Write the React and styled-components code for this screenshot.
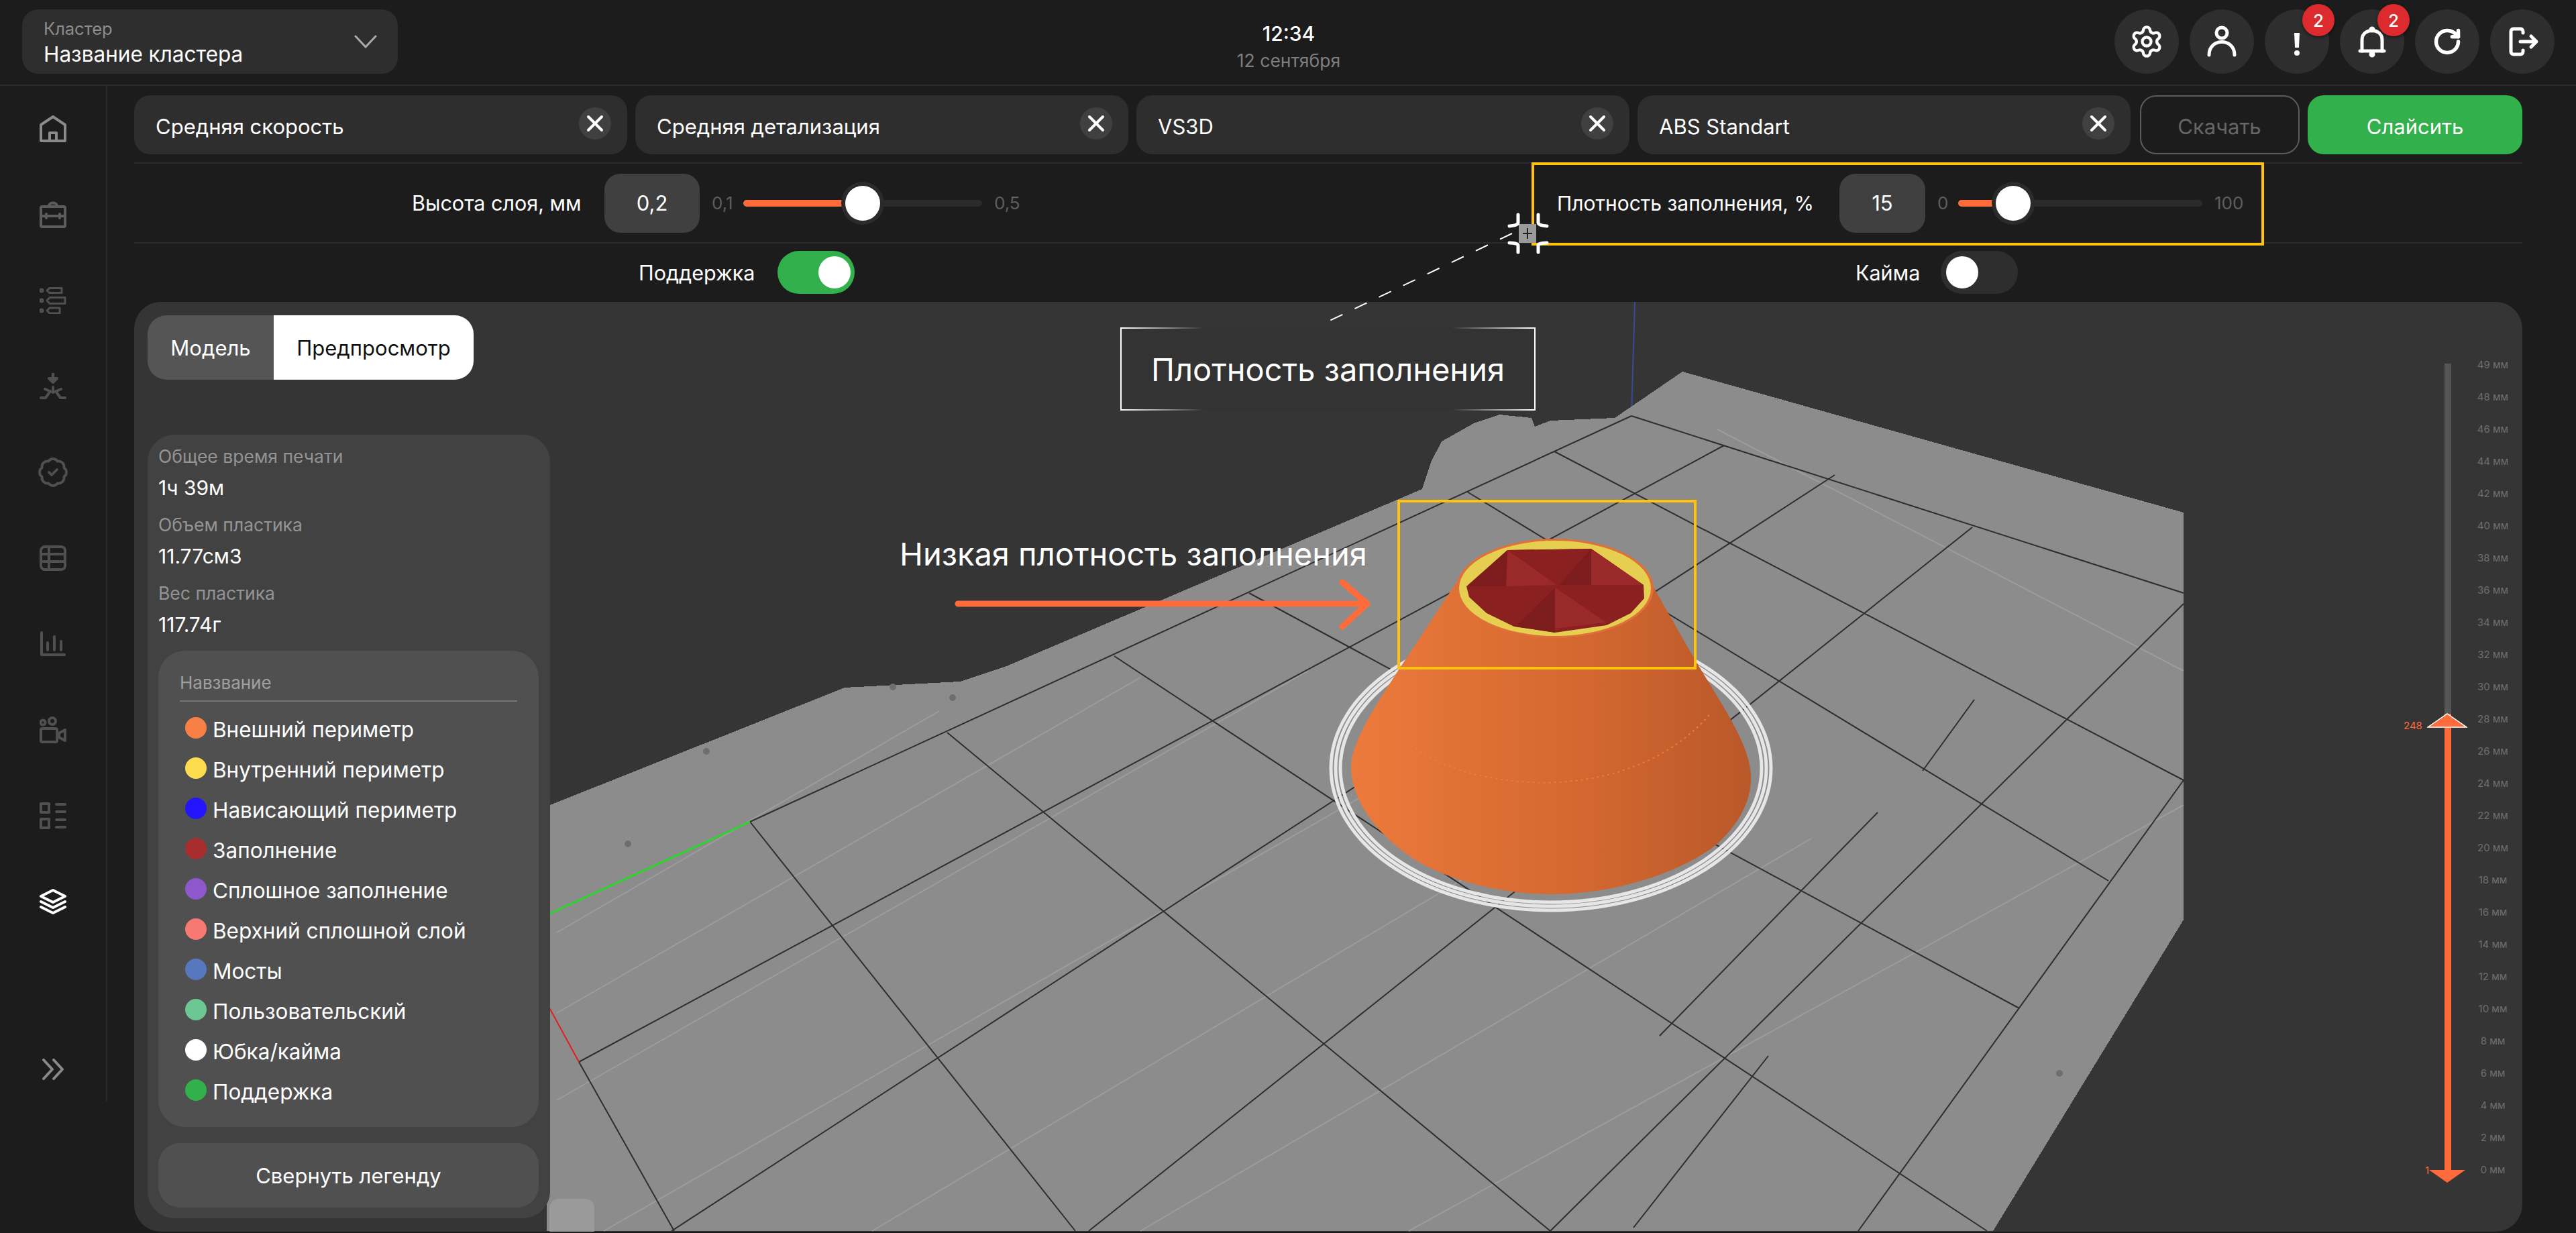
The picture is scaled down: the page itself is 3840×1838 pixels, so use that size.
import React from "react";
import styled, { createGlobalStyle } from "styled-components";
import { Settings, RotateCw, X, BadgeCheck } from "lucide-react";

const GlobalStyle = createGlobalStyle`
  html, body {
    margin: 0;
    padding: 0;
    background: #1c1c1c;
  }
  * {
    box-sizing: border-box;
  }
`;

const Page = styled.div`
  position: relative;
  width: 3840px;
  height: 1838px;
  overflow: hidden;
  background: #1c1c1c;
  color: #fff;
  font-family: Inter, "Noto Sans", sans-serif;
`;

const Header = styled.header`
  display: flex;
  align-items: center;
  justify-content: space-between;
  height: 128px;
  padding: 0 32px 2px 33px;
  border-bottom: 2px solid #2b2b2b;
`;

const Cluster = styled.div`
  display: flex;
  align-items: center;
  justify-content: space-between;
  width: 560px;
  height: 96px;
  padding: 0 31px 0 32px;
  background: #2e2e2e;
  border-radius: 24px;
`;

const ClusterText = styled.div`
  display: flex;
  flex-direction: column;
  gap: 4px;
  padding-top: 3px;
`;

const ClusterLabel = styled.span`
  font-size: 25.5px;
  line-height: 30px;
  color: #8c8c8c;
`;

const ClusterName = styled.span`
  font-size: 31.5px;
  line-height: 38px;
`;

const Clock = styled.div`
  position: absolute;
  left: 1771px;
  top: 30px;
  width: 300px;
  text-align: center;
`;

const ClockTime = styled.div`
  font-size: 30px;
  line-height: 40px;
  font-weight: 500;
`;

const ClockDate = styled.div`
  font-size: 26.5px;
  line-height: 40px;
  color: #7f7f7f;
`;

const Actions = styled.div`
  display: flex;
  gap: 16px;
`;

const RoundButton = styled.div`
  position: relative;
  display: flex;
  align-items: center;
  justify-content: center;
  width: 96px;
  height: 96px;
  background: #2e2e2e;
  border-radius: 50%;
  color: #fff;
`;

const Badge = styled.span`
  position: absolute;
  top: -8px;
  right: -8px;
  display: flex;
  align-items: center;
  justify-content: center;
  width: 48px;
  height: 48px;
  background: #dc2b2e;
  border-radius: 50%;
  box-shadow: 0 2px 4px rgba(0, 0, 0, 0.5);
  font-size: 26px;
  font-weight: 500;
`;

const Body = styled.div`
  display: flex;
  height: 1710px;
`;

const Sidebar = styled.nav`
  display: flex;
  flex: none;
  flex-direction: column;
  width: 160px;
  height: 1513px;
  border-right: 2px solid #2b2b2b;
`;

const SideItem = styled.div`
  display: flex;
  align-items: center;
  justify-content: center;
  flex: 0 0 ${(p) => p.$height || 128}px;
  margin-top: ${(p) => (p.$bottom ? "auto" : "0")};
  color: ${(p) => p.$color || "#505050"};
`;

const Main = styled.main`
  flex: 1;
  min-width: 0;
  padding: 14px 80px 2px 40px;
  display: flex;
  flex-direction: column;
`;

const PresetRow = styled.div`
  display: flex;
  gap: 12.5px;
  height: 88px;
`;

const Chip = styled.div`
  display: flex;
  align-items: center;
  justify-content: space-between;
  width: 734.5px;
  padding: 0 24px 0 32px;
  background: #2e2e2e;
  border-radius: 24px;
  font-size: 31px;
`;

const ChipName = styled.span`
  padding-top: 5px;
`;

const ChipClose = styled.span`
  display: flex;
  align-items: center;
  justify-content: center;
  width: 48px;
  height: 48px;
  margin-top: -4px;
  background: #404040;
  border-radius: 50%;
`;

const OutlineButton = styled.div`
  display: flex;
  align-items: center;
  justify-content: center;
  width: 238px;
  margin-left: 1.5px;
  padding-top: 4px;
  border: 2px solid #5c5c5c;
  border-radius: 24px;
  font-size: 31px;
  color: #666;
`;

const GreenButton = styled.div`
  display: flex;
  align-items: center;
  justify-content: center;
  width: 320px;
  padding-top: 4px;
  background: #31b04b;
  border-radius: 24px;
  font-size: 31px;
`;

const ParamRow = styled.div`
  display: grid;
  grid-template-columns: 1780px 1780px;
  align-items: ${(p) => p.$align || "center"};
  height: ${(p) => p.$height}px;
  margin-top: ${(p) => p.$top || 0}px;
  border-top: 2px solid #2b2b2b;
`;

const ParamCell = styled.div`
  display: flex;
  align-items: center;
  padding-left: ${(p) => p.$inset}px;
`;

const ParamLabel = styled.span`
  flex: none;
  width: ${(p) => p.$width}px;
  font-size: ${(p) => p.$size || 30.5}px;
  margin-right: ${(p) => p.$gap}px;
  white-space: nowrap;
`;

const ValueBox = styled.div`
  display: flex;
  flex: none;
  align-items: center;
  justify-content: center;
  width: ${(p) => p.$width}px;
  height: 88px;
  background: #404040;
  border-radius: 24px;
  font-size: 31px;
`;

const RangeText = styled.span`
  flex: none;
  width: ${(p) => p.$width}px;
  margin: 0 16px 0 18px;
  font-size: 26px;
  color: #5e5e5e;
  white-space: nowrap;
`;

const Track = styled.div`
  position: relative;
  flex: none;
  width: ${(p) => p.$width}px;
  height: 10px;
  background: #2b2b2b;
  border-radius: 5px;
`;

const TrackFill = styled.div`
  height: 100%;
  background: #ff6b3a;
  border-radius: 5px 0 0 5px;
`;

const Thumb = styled.div`
  position: absolute;
  top: 50%;
  width: 52px;
  height: 52px;
  background: #fff;
  border-radius: 50%;
  box-shadow: 0 0 0 6px #2b2b2b;
  transform: translate(-50%, -50%);
`;

const Switch = styled.div`
  display: flex;
  flex: none;
  align-items: center;
  justify-content: ${(p) => (p.$on ? "flex-end" : "flex-start")};
  width: 115px;
  height: 64px;
  padding: 0 6px 0 8px;
  background: ${(p) => (p.$on ? "#31b04b" : "#2e2e2e")};
  border-radius: 32px;
`;

const SwitchKnob = styled.div`
  width: 48px;
  height: 48px;
  background: #fff;
  border-radius: 50%;
`;

const ViewerPanel = styled.section`
  position: relative;
  flex: 1;
  margin-top: 12px;
  padding: 20px;
  display: flex;
  flex-direction: column;
  background: #353535;
  border-radius: 40px;
  overflow: hidden;
`;

const Scene = styled.svg`
  position: absolute;
  left: 0;
  top: 0;
  width: 3560px;
  height: 1386px;
`;

const Tabs = styled.div`
  position: relative;
  display: flex;
  width: 486px;
  height: 96px;
  border-radius: 28px;
  overflow: hidden;
  font-size: 31px;
`;

const Tab = styled.div`
  display: flex;
  align-items: center;
  justify-content: center;
  width: ${(p) => p.$width}px;
  background: ${(p) => (p.$active ? "#fff" : "#555")};
  color: ${(p) => (p.$active ? "#111" : "#fff")};
`;

const InfoPanel = styled.div`
  position: relative;
  display: flex;
  flex-direction: column;
  width: 600px;
  height: 1168px;
  margin-top: 82px;
  padding: 16px 17px 16px 16px;
  background: #424242;
  border-radius: 40px;
`;

const Stat = styled.div`
  height: 102px;
`;

const StatLabel = styled.div`
  font-size: 26.5px;
  line-height: 32px;
  color: #949494;
`;

const StatValue = styled.div`
  margin-top: 11px;
  font-size: 30px;
  line-height: 40px;
`;

const Legend = styled.div`
  height: 710px;
  padding: 32px 32px 0;
  background: #505050;
  border-radius: 40px;
`;

const LegendTitle = styled.div`
  padding-bottom: 10px;
  border-bottom: 2px solid #757575;
  font-size: 26px;
  line-height: 32px;
  color: #a0a0a0;
`;

const LegendList = styled.div`
  display: flex;
  flex-direction: column;
  margin-top: 11px;
  padding-left: 8px;
`;

const LegendItem = styled.div`
  display: flex;
  align-items: center;
  gap: 9px;
  height: 60px;
  font-size: 31.5px;
`;

const Dot = styled.span`
  flex: none;
  width: 32px;
  height: 32px;
  margin-top: -4px;
  background: ${(p) => p.$color};
  border-radius: 50%;
`;

const CollapseButton = styled.div`
  display: flex;
  align-items: center;
  justify-content: center;
  height: 96px;
  margin-top: 24px;
  background: #505050;
  border-radius: 32px;
  font-size: 31px;
`;

const LayerScale = styled.div`
  position: absolute;
  left: 3360px;
  top: 70px;
  display: flex;
  width: 200px;
  height: 1260px;
`;

const LayerBar = styled.div`
  position: absolute;
  left: 84px;
  top: 22px;
  width: 10px;
  height: 1202px;
  background: #555;
`;

const LayerBarFill = styled.div`
  position: absolute;
  left: 0;
  right: 0;
  bottom: 0;
  height: 680px;
  background: #ff6b3a;
`;

const LayerTicks = styled.div`
  position: absolute;
  left: 126px;
  top: 0;
  width: 60px;
`;

const LayerTick = styled.div`
  height: 48px;
  line-height: 48px;
  font-size: 15px;
  text-align: center;
  color: #6f6f6f;
  white-space: nowrap;
`;

const LayerCount = styled.span`
  position: absolute;
  left: ${(p) => p.$left}px;
  top: ${(p) => p.$top}px;
  font-size: 15px;
  line-height: 20px;
  color: #ff6b3a;
`;

const LayerHandle = styled.svg`
  position: absolute;
  left: 58px;
  top: ${(p) => p.$top}px;
`;

const Frame = styled.div`
  position: absolute;
  left: ${(p) => p.$left}px;
  top: ${(p) => p.$top}px;
  width: ${(p) => p.$width}px;
  height: ${(p) => p.$height}px;
  border: 4px solid #ffc20e;
  pointer-events: none;
`;

const Overlay = styled.svg`
  position: absolute;
  left: 0;
  top: 0;
  pointer-events: none;
`;

const Callout = styled.div`
  position: absolute;
  left: 1670px;
  top: 488px;
  display: flex;
  align-items: center;
  justify-content: center;
  width: 619px;
  height: 124px;
  background: #333;
  border-left: 2px solid #fff;
  border-right: 2px solid #fff;
  font-size: 47px;

  &::before,
  &::after {
    content: "";
    position: absolute;
    left: 0;
    right: 0;
    height: 2px;
    background: linear-gradient(90deg, #fff 0, transparent 20%, transparent 80%, #fff 100%);
  }
  &::before {
    top: 0;
  }
  &::after {
    bottom: 0;
  }
`;

const Note = styled.div`
  position: absolute;
  left: 1341px;
  top: 796px;
  font-size: 47px;
  line-height: 60px;
  white-space: nowrap;
`;

const stroke = { fill: "none", stroke: "currentColor", strokeLinecap: "round", strokeLinejoin: "round" };

const HomeIcon = () => (
  <svg width="40" height="40" viewBox="0 0 40 40" {...stroke} strokeWidth="4">
    <path d="M20 2 L38 14 V38 H2 V14 Z" />
    <path d="M15 38 V26 H25 V38" />
  </svg>
);

const BriefcaseIcon = () => (
  <svg width="40" height="40" viewBox="0 0 40 40" {...stroke} strokeWidth="4">
    <rect x="2" y="8" width="36" height="30" rx="2" />
    <path d="M14 7 C14 1 26 1 26 7" />
    <path d="M2 22 H38" />
    <path d="M10 19 V25 M30 19 V25" />
  </svg>
);

const TasksIcon = () => (
  <svg width="40" height="40" viewBox="0 0 40 40" {...stroke} strokeWidth="3">
    <circle cx="3" cy="5" r="2" />
    <circle cx="3" cy="20" r="2" />
    <circle cx="3" cy="35" r="2" />
    <path d="M11 5 L15 1.5 H33 V8.5 H15 Z" />
    <path d="M11 20 L15 15.5 H38 V24.5 H15 Z" />
    <path d="M11 35 L15 31 H30 V39 H15 Z" />
  </svg>
);

const MergeIcon = () => (
  <svg width="40" height="40" viewBox="0 0 40 40" {...stroke} strokeWidth="4">
    <path d="M20 0 V9" />
    <path d="M14 8 H26 L20 14 Z" fill="currentColor" />
    <path d="M20 21 V29 M20 29 L8 24 M20 29 L32 24" />
    <path d="M2 37 H9 L14 30 M38 37 H31 L26 30" />
  </svg>
);

const TableIcon = () => (
  <svg width="40" height="38" viewBox="0 0 40 38" {...stroke} strokeWidth="4">
    <rect x="2" y="2" width="36" height="34" rx="6" />
    <path d="M2 13 H38 M2 24 H38 M14 2 V36" />
  </svg>
);

const ChartIcon = () => (
  <svg width="40" height="38" viewBox="0 0 40 38" {...stroke} strokeWidth="4">
    <path d="M3 2 V35 H37" />
    <path d="M12 17 V28 M22 8 V28 M32 15 V28" />
  </svg>
);

const CameraIcon = () => (
  <svg width="40" height="40" viewBox="0 0 40 40" {...stroke} strokeWidth="4">
    <circle cx="5" cy="9" r="3.5" />
    <circle cx="19" cy="7" r="5" />
    <rect x="2" y="18" width="24" height="20" rx="2" />
    <path d="M38 20 V36 L29 31 V25 Z" />
  </svg>
);

const GridListIcon = () => (
  <svg width="40" height="40" viewBox="0 0 40 40" {...stroke} strokeWidth="4">
    <rect x="2" y="2" width="12" height="13" />
    <rect x="2" y="25" width="12" height="13" />
    <path d="M25 3 H38 M25 14 H38 M25 26 H38 M25 37 H38" />
  </svg>
);

const LayersIcon = () => (
  <svg width="40" height="38" viewBox="0 0 40 38" {...stroke} strokeWidth="4">
    <path d="M20 2 L38 11 L20 20 L2 11 Z" />
    <path d="M2 19 L20 28 L38 19" />
    <path d="M2 27 L20 36 L38 27" />
  </svg>
);

const DoubleChevronIcon = () => (
  <svg width="34" height="32" viewBox="0 0 34 32" {...stroke} strokeWidth="4">
    <path d="M3 2 L16 16 L3 30" />
    <path d="M18 2 L31 16 L18 30" />
  </svg>
);

const ChevronIcon = () => (
  <svg width="34" height="20" viewBox="0 0 34 20" fill="none" stroke="#aaa" strokeWidth="3" strokeLinecap="round">
    <path d="M2 2 L17 18 L32 2" />
  </svg>
);

const UserIcon = () => (
  <svg width="48" height="48" viewBox="0 0 48 48" {...stroke} strokeWidth="5">
    <circle cx="24" cy="11" r="8" />
    <path d="M5 44 C5 18 43 18 43 44" />
  </svg>
);

const AlertIcon = () => (
  <svg width="48" height="48" viewBox="0 0 48 48" fill="#fff">
    <path d="M20 11 H28 L27 33 H21 Z" />
    <circle cx="24" cy="41" r="4" />
  </svg>
);

const BellIcon = () => (
  <svg width="48" height="48" viewBox="0 0 48 48" {...stroke} strokeWidth="5">
    <path d="M9 38 V21 C9 3 39 3 39 21 V38" />
    <path d="M6 38 H42" />
    <circle cx="24" cy="6" r="2" fill="#fff" />
    <circle cx="24" cy="43" r="2" fill="#fff" />
  </svg>
);

const ExitIcon = () => (
  <svg width="52" height="48" viewBox="0 0 52 48" {...stroke} strokeWidth="5">
    <path d="M27 11 V9 C27 6 25 5 23 5 H13 C10 5 9 7 9 9 V39 C9 41 10 43 13 43 H23 C25 43 27 42 27 39 V37" />
    <path d="M23 24 H46 M39 16 L47 24 L39 32" />
  </svg>
);

const bedOutline =
  "815,1202 1259,1025 1431,1016 1498,994 2120,729 2133,689 2149,658 2197,631 2235,618 2283,623 2288,636 2311,627 2407,623 2508,554 3255,764 3255,1371 2971,1835 815,1835";

const gridLines = [
  "2432,620 1118,1225",
  "2432,620 3255,884",
  "1118,1225 1603,1835",
  "1412,1092 2311,1835",
  "1661,978 2962,1835",
  "1862,884 3010,1503",
  "2187,733 3143,1313",
  "2317,673 3255,1163",
  "863,1583 2570,664",
  "1001,1835 2735,708",
  "1623,1835 2940,786",
  "2311,1835 3255,900",
  "2770,1835 3255,1163",
  "863,1583 1005,1835",
  "2435,1830 2636,1574",
  "2474,1544 2799,1211",
  "2866,1149 2943,1043",
];

const faintLines = [
  "830,1390 1400,1060",
  "830,1510 1700,1010",
  "830,1640 1950,1000",
  "900,1835 2200,1090",
  "1300,1835 2400,1180",
  "1700,1835 2700,1250",
  "2100,1835 3255,1200",
  "2560,640 3255,1000",
];

const bedSpecks = [
  [1331, 1024], [1420, 1040], [1053, 1120], [936, 1258], [3070, 1600],
];

const cone =
  "M2173 865 L2086 997 C2050 1052 2012 1110 2014 1146 C2016 1200 2060 1250 2110 1282 C2170 1318 2250 1333 2313 1333 C2400 1333 2500 1305 2560 1258 C2590 1230 2612 1195 2610 1155 C2608 1115 2580 1070 2528 986 L2464 874 Z";

const infillHole =
  "2247,820 2372,818 2450,872 2451,892 2431,914 2395,932 2318,943 2257,934 2216,914 2190,890 2186,874";

const pinwheel = [
  ["2247,820 2372,818 2321,872", "#8a2020"],
  ["2247,820 2321,872 2245,874", "#9a2929"],
  ["2247,820 2245,874 2188,874", "#7d1c1c"],
  ["2188,876 2313,876 2260,934", "#8a2020"],
  ["2318,876 2318,943 2260,934", "#7d1c1c"],
  ["2318,876 2395,928 2318,937", "#9a2929"],
  ["2321,874 2448,874 2395,928", "#8a2020"],
  ["2372,818 2450,872 2324,872", "#9a2929"],
  ["2372,818 2372,872 2324,872", "#7d1c1c"],
];

const sideIcons = [
  { icon: <HomeIcon />, color: "#8a8a8a" },
  { icon: <BriefcaseIcon />, color: "#5c5c5c" },
  { icon: <TasksIcon /> },
  { icon: <MergeIcon /> },
  { icon: <BadgeCheck size={48} strokeWidth={1.9} /> },
  { icon: <TableIcon /> },
  { icon: <ChartIcon /> },
  { icon: <CameraIcon /> },
  { icon: <GridListIcon /> },
  { icon: <LayersIcon />, color: "#fff" },
];

const legend = [
  ["#f98044", "Внешний периметр"],
  ["#fcdc4d", "Внутренний периметр"],
  ["#2515ff", "Нависающий периметр"],
  ["#a82e2e", "Заполнение"],
  ["#8f57cc", "Сплошное заполнение"],
  ["#f67a72", "Верхний сплошной слой"],
  ["#5778bf", "Мосты"],
  ["#6dc792", "Пользовательский"],
  ["#ffffff", "Юбка/кайма"],
  ["#31b04b", "Поддержка"],
];

const ticks = [49, 48, 46, 44, 42, 40, 38, 36, 34, 32, 30, 28, 26, 24, 22, 20, 18, 16, 14, 12, 10, 8, 6, 4, 2, 0];

const presets = ["Средняя скорость", "Средняя детализация", "VS3D", "ABS Standart"];

const Slider = ({ min, max, percent, width, minWidth }) => (
  <>
    <RangeText $width={minWidth}>{min}</RangeText>
    <Track $width={width}>
      <TrackFill style={{ width: `${percent}%` }} />
      <Thumb style={{ left: `${percent}%` }} />
    </Track>
    <RangeText $width={60}>{max}</RangeText>
  </>
);

const App = () => (
  <Page>
    <GlobalStyle />
    <Header>
      <Cluster>
        <ClusterText>
          <ClusterLabel>Кластер</ClusterLabel>
          <ClusterName>Название кластера</ClusterName>
        </ClusterText>
        <ChevronIcon />
      </Cluster>
      <Clock>
        <ClockTime>12:34</ClockTime>
        <ClockDate>12 сентября</ClockDate>
      </Clock>
      <Actions>
        <RoundButton><Settings size={52} strokeWidth={2} /></RoundButton>
        <RoundButton><UserIcon /></RoundButton>
        <RoundButton><AlertIcon /><Badge>2</Badge></RoundButton>
        <RoundButton><BellIcon /><Badge>2</Badge></RoundButton>
        <RoundButton><RotateCw size={44} strokeWidth={3} /></RoundButton>
        <RoundButton><ExitIcon /></RoundButton>
      </Actions>
    </Header>
    <Body>
      <Sidebar>
        {sideIcons.map((item, i) => (
          <SideItem key={i} $color={item.color}>{item.icon}</SideItem>
        ))}
        <SideItem $bottom $height={94} $color="#8a8a8a">
          <DoubleChevronIcon />
        </SideItem>
      </Sidebar>
      <Main>
        <PresetRow>
          {presets.map((name) => (
            <Chip key={name}>
              <ChipName>{name}</ChipName>
              <ChipClose><X size={40} strokeWidth={2.4} /></ChipClose>
            </Chip>
          ))}
          <OutlineButton>Скачать</OutlineButton>
          <GreenButton>Слайсить</GreenButton>
        </PresetRow>
        <ParamRow $top={12} $height={119}>
          <ParamCell $inset={414}>
            <ParamLabel $width={251} $gap={36}>Высота слоя, мм</ParamLabel>
            <ValueBox $width={142}>0,2</ValueBox>
            <Slider min="0,1" max="0,5" percent={50} width={356} minWidth={31} />
          </ParamCell>
          <ParamCell $inset={341}>
            <ParamLabel $width={387} $gap={34} $size={30}>Плотность заполнения, %</ParamLabel>
            <ValueBox $width={128}>15</ValueBox>
            <Slider min="0" max="100" percent={22.5} width={364} minWidth={15} />
          </ParamCell>
        </ParamRow>
        <ParamRow $height={77} $align="end">
          <ParamCell $inset={752}>
            <ParamLabel $width={174} $gap={33}>Поддержка</ParamLabel>
            <Switch $on><SwitchKnob /></Switch>
          </ParamCell>
          <ParamCell $inset={786}>
            <ParamLabel $width={94} $gap={33}>Кайма</ParamLabel>
            <Switch><SwitchKnob /></Switch>
          </ParamCell>
        </ParamRow>
        <ViewerPanel>
          <Scene viewBox="200 450 3560 1386">
            <line x1="2437" y1="450" x2="2432" y2="620" stroke="#3a4a9a" strokeWidth="2" />
            <polygon points={bedOutline} fill="#8c8c8c" shapeRendering="crispEdges" />
            <rect x="819" y="1787" width="67" height="60" rx="14" fill="#9a9a9a" />
            {faintLines.map((pts) => (
              <polyline key={pts} points={pts} fill="none" stroke="#9c9c9c" strokeWidth="2" />
            ))}
            {gridLines.map((pts) => (
              <polyline key={pts} points={pts} fill="none" stroke="#2e2e2e" strokeWidth="2" />
            ))}
            {bedSpecks.map(([x, y]) => (
              <circle key={x} cx={x} cy={y} r="5" fill="#6e6e6e" />
            ))}
            <line x1="815" y1="1364" x2="1118" y2="1225" stroke="#2bd62b" strokeWidth="3" />
            <line x1="815" y1="1495" x2="863" y2="1583" stroke="#e02020" strokeWidth="2" />
            <defs>
              <linearGradient id="coneShade" x1="0" y1="0" x2="1" y2="0">
                <stop offset="0" stopColor="#ec7a3c" />
                <stop offset="0.6" stopColor="#d2672f" />
                <stop offset="1" stopColor="#b9582a" />
              </linearGradient>
            </defs>
            <ellipse cx="2312" cy="1145" rx="328" ry="212" fill="none" stroke="#e6e6e6" strokeWidth="5" />
            <ellipse cx="2312" cy="1145" rx="321" ry="206" fill="none" stroke="#e6e6e6" strokeWidth="5" />
            <ellipse cx="2312" cy="1145" rx="314" ry="200" fill="none" stroke="#e6e6e6" strokeWidth="5" />
            <path d={cone} fill="url(#coneShade)" />
            <path d="M2104 1111 C2180 1175 2420 1210 2548 1066" fill="none" stroke="#ee7a3c" strokeWidth="2" strokeDasharray="3 5" />
            <ellipse cx="2318" cy="877" rx="147" ry="74" fill="#e07038" />
            <ellipse cx="2318" cy="877" rx="143" ry="71" fill="#e6cf50" />
            <polygon points={infillHole} fill="#8a2020" />
            {pinwheel.map(([pts, fill]) => (
              <polygon key={pts} points={pts} fill={fill} />
            ))}
          </Scene>
          <Tabs>
            <Tab $width={188}>Модель</Tab>
            <Tab $width={298} $active>Предпросмотр</Tab>
          </Tabs>
          <InfoPanel>
            <Stat>
              <StatLabel>Общее время печати</StatLabel>
              <StatValue>1ч 39м</StatValue>
            </Stat>
            <Stat>
              <StatLabel>Объем пластика</StatLabel>
              <StatValue>11.77см3</StatValue>
            </Stat>
            <Stat>
              <StatLabel>Вес пластика</StatLabel>
              <StatValue>117.74г</StatValue>
            </Stat>
            <Legend>
              <LegendTitle>Навзвание</LegendTitle>
              <LegendList>
                {legend.map(([color, name]) => (
                  <LegendItem key={name}>
                    <Dot $color={color} />
                    {name}
                  </LegendItem>
                ))}
              </LegendList>
            </Legend>
            <CollapseButton>Свернуть легенду</CollapseButton>
          </InfoPanel>
          <LayerScale>
            <LayerBar>
              <LayerBarFill />
            </LayerBar>
            <LayerHandle $top={543} width="60" height="22" viewBox="0 0 60 22">
              <polygon points="1,21 30,1 59,21" fill="#ff6b3a" stroke="#fff" strokeWidth="1.5" />
            </LayerHandle>
            <LayerHandle $top={1224} width="60" height="20" viewBox="0 0 60 20">
              <polygon points="3,0 57,0 30,19" fill="#ff6b3a" />
            </LayerHandle>
            <LayerCount $left={23} $top={552}>248</LayerCount>
            <LayerCount $left={55} $top={1215}>1</LayerCount>
            <LayerTicks>
              {ticks.map((mm) => (
                <LayerTick key={mm}>{mm} мм</LayerTick>
              ))}
            </LayerTicks>
          </LayerScale>
        </ViewerPanel>
      </Main>
    </Body>
    <Frame $left={2283} $top={242} $width={1092} $height={124} />
    <Frame $left={2083} $top={745} $width={446} $height={253} />
    <Overlay width="3840" height="1838" viewBox="0 0 3840 1838">
      <line x1="2254" y1="348" x2="1978" y2="480" stroke="#fff" strokeWidth="2" strokeDasharray="20 20" />
      <rect x="2264" y="334" width="26" height="28" fill="#9a9a9a" />
      <path d="M2277 340 V356 M2270 348 H2284" stroke="#222" strokeWidth="2" />
      <g fill="none" stroke="#fff" strokeWidth="5" strokeLinecap="round">
        <path d="M2263 320 V332 Q2263 336 2250 337" />
        <path d="M2293 320 V332 Q2293 336 2306 337" />
        <path d="M2250 362 Q2263 362 2263 366 V376" />
        <path d="M2306 362 Q2293 362 2293 366 V376" />
      </g>
      <g fill="none" stroke="#ff6b3a" strokeWidth="9" strokeLinecap="round" strokeLinejoin="round">
        <path d="M1428 900 H2036" />
        <path d="M2001 868 L2038 900 L2001 934" />
      </g>
    </Overlay>
    <Callout>Плотность заполнения</Callout>
    <Note>Низкая плотность заполнения</Note>
  </Page>
);

export default App;
